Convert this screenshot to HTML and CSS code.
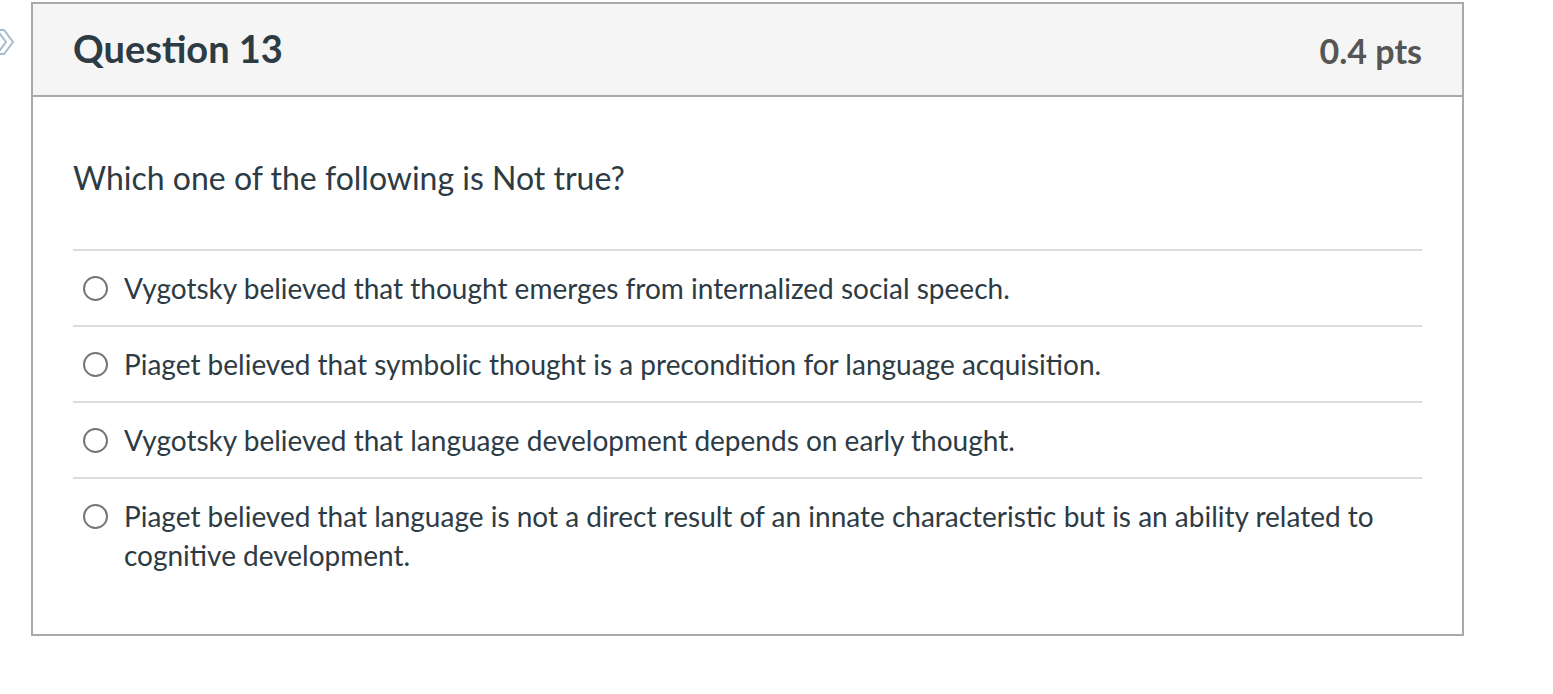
FILE: index.html
```html
<!DOCTYPE html>
<html>
<head>
<meta charset="utf-8">
<link rel="stylesheet" href="styles.css">
</head>
<body>
<div class="page">
  <div class="side">
    <svg class="chev" width="16" height="26" viewBox="0 0 16 26">
      <path d="M-3 1 L4 1 L13 13 L4 25 L-3 25 L6 13 Z" fill="none" stroke="#a9bccd" stroke-width="2" stroke-linejoin="miter"/>
    </svg>
  </div>
  <div class="card">
    <div class="card-header">
      <h2 class="q-title">Question 13</h2>
      <span class="q-pts">0.4 pts</span>
    </div>
    <div class="card-body">
      <p class="q-text">Which one of the following is Not true?</p>
      <div class="answers">
        <label class="answer"><span class="radio"></span><span class="a-text">Vygotsky believed that thought emerges from internalized social speech.</span></label>
        <label class="answer"><span class="radio"></span><span class="a-text">Piaget believed that symbolic thought is a precondition for language acquisition.</span></label>
        <label class="answer"><span class="radio"></span><span class="a-text">Vygotsky believed that language development depends on early thought.</span></label>
        <label class="answer"><span class="radio"></span><span class="a-text">Piaget believed that language is not a direct result of an innate characteristic but is an ability related to cognitive development.</span></label>
      </div>
    </div>
  </div>
</div>
</body>
</html>
```

FILE: styles.css
```css
html, body {
  margin: 0;
  padding: 0;
  background: #fff;
}
body {
  font-family: Lato, "Noto Sans", sans-serif;
  color: #2d3b45;
}
.page {
  display: flex;
  align-items: flex-start;
  padding-top: 2px;
}
.side {
  width: 31px;
  flex: none;
  padding-top: 27px;
}
.chev {
  display: block;
}
.card {
  width: 1429px;
  border: 2px solid #a9a9a9;
  box-sizing: content-box;
}
.card-header {
  background: #f5f5f5;
  border-bottom: 2px solid #a9a9a9;
  height: 91px;
  display: flex;
  align-items: center;
  justify-content: space-between;
  padding: 0 40px 0 40px;
}
.q-title {
  margin: 0;
  font-size: 38px;
  font-weight: 700;
  line-height: 1;
  color: #2d3b45;
  position: relative;
  top: -2px;
}
.q-pts {
  font-size: 34px;
  font-weight: 700;
  line-height: 1;
  color: #555;
  position: relative;
  top: 1px;
}
.card-body {
  padding: 61px 40px 42px 40px;
}
.q-text {
  margin: 0 0 51px 0;
  font-size: 32px;
  line-height: 40px;
}
.answers {
  display: flex;
  flex-direction: column;
}
.answer {
  display: flex;
  align-items: flex-start;
  border-top: 2px solid #dcdcdc;
  padding: 18px 0 17px 10px;
  font-size: 28px;
  line-height: 39px;
}
.radio {
  flex: none;
  width: 21px;
  height: 21px;
  border: 2px solid #767676;
  border-radius: 50%;
  margin-top: 7px;
  margin-right: 16px;
}
.a-text {
  flex: 1;
}
```
